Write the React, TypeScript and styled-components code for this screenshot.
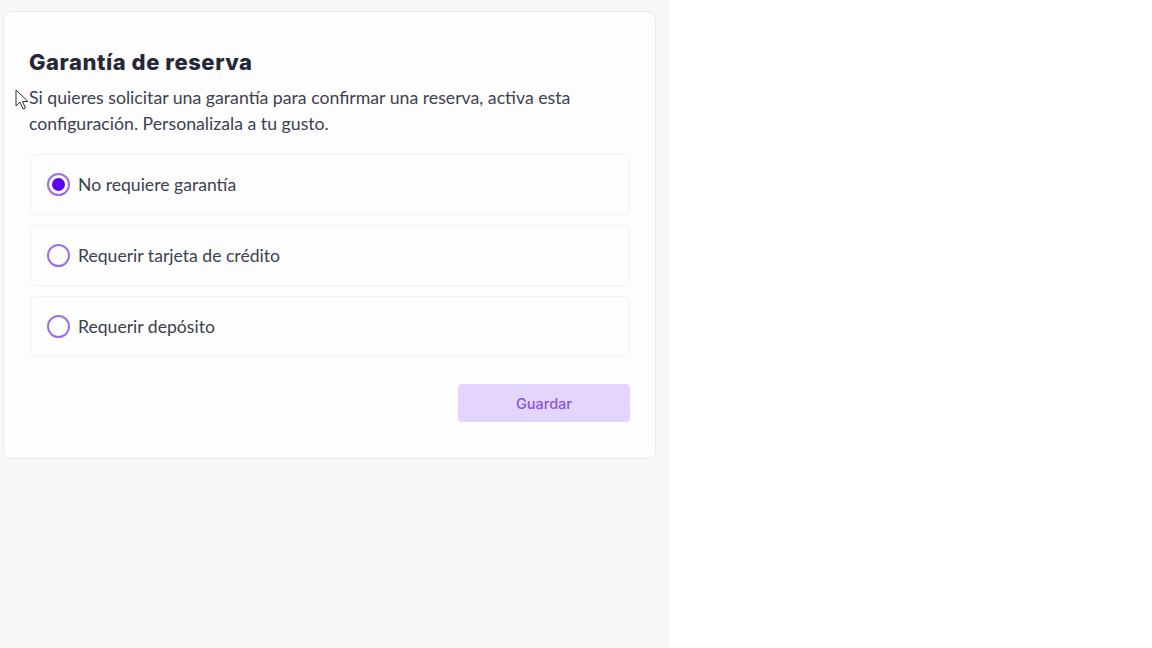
import React, { useState } from "react";
import styled, { createGlobalStyle } from "styled-components";

const Global = createGlobalStyle`
  html, body { margin: 0; padding: 0; background: #ffffff; }
  body { font-family: "Lato", "Noto Sans", sans-serif; }
  * { box-sizing: border-box; }
`;

const Page = styled.div`
  display: flex;
  width: 1152px;
  height: 648px;
  background: #ffffff;
`;

const LeftPanel = styled.div`
  position: relative;
  width: 669px;
  height: 648px;
  background: #f8f8f9;
  padding: 11px 13px 0 3px;
`;

const Card = styled.section`
  background: #fdfdfd;
  border: 1px solid #ebebee;
  border-radius: 8px;
  padding: 36px 25px 36px 25px;
  display: flex;
  flex-direction: column;
`;

const Title = styled.h2`
  margin: 0;
  font-family: "Inter", "Open Sans", sans-serif;
  font-weight: 800;
  font-size: 22px;
  line-height: 28px;
  color: #262838;
  letter-spacing: 0.55px;
`;

const Description = styled.p`
  margin: 9px 0 17px 0;
  font-family: "Lato", "Noto Sans", sans-serif;
  font-size: 17.7px;
  line-height: 26px;
  color: #3d4150;
`;

const Options = styled.div`
  display: flex;
  flex-direction: column;
  gap: 10px;
`;

const OptionRow = styled.label`
  display: flex;
  align-items: center;
  gap: 8px;
  height: 61px;
  padding: 0 16px;
  margin-left: 1px;
  border: 1px solid #f2f2f4;
  border-radius: 6px;
  background: #fdfdfd;
  cursor: pointer;
`;

const Radio = styled.span<{ $checked: boolean }>`
  width: 23px;
  height: 23px;
  border-radius: 50%;
  border: 2px solid #9d6fe3;
  display: flex;
  align-items: center;
  justify-content: center;
  flex-shrink: 0;
  &::after {
    content: "";
    width: 13px;
    height: 13px;
    border-radius: 50%;
    background: #5b00f0;
    display: ${(p) => (p.$checked ? "block" : "none")};
  }
`;

const OptionLabel = styled.span`
  font-family: "Lato", "Noto Sans", sans-serif;
  font-size: 17.6px;
  color: #3b4250;
`;

const Footer = styled.div`
  display: flex;
  justify-content: flex-end;
  margin-top: 27px;
`;

const SaveButton = styled.button`
  width: 172px;
  height: 38px;
  border: none;
  border-radius: 4px;
  background: #e3d5fc;
  color: #8b52e2;
  font-family: "Inter", "Open Sans", sans-serif;
  font-weight: 500;
  font-size: 14.5px;
  cursor: pointer;
`;

const Cursor = styled.svg`
  position: absolute;
  left: 15px;
  top: 89px;
  width: 14px;
  height: 22px;
`;

const options = [
  "No requiere garantía",
  "Requerir tarjeta de crédito",
  "Requerir depósito",
];

export default function App() {
  const [selected, setSelected] = useState(0);
  return (
    <>
      <Global />
      <Page>
        <LeftPanel>
          <Card>
            <Title>Garantía de reserva</Title>
            <Description>
              Si quieres solicitar una garantía para confirmar una reserva, activa esta
              <br />
              configuración. Personalizala a tu gusto.
            </Description>
            <Options>
              {options.map((o, i) => (
                <OptionRow key={o} onClick={() => setSelected(i)}>
                  <Radio $checked={selected === i} />
                  <OptionLabel>{o}</OptionLabel>
                </OptionRow>
              ))}
            </Options>
            <Footer>
              <SaveButton>Guardar</SaveButton>
            </Footer>
          </Card>
          <Cursor viewBox="0 0 14 22">
            <path
              d="M1 1 L1 17 L5 13 L8 20 L10.5 19 L7.5 12.5 L13 12.5 Z"
              fill="#ffffff"
              stroke="#333"
              strokeWidth="1"
              strokeLinejoin="round"
            />
          </Cursor>
        </LeftPanel>
      </Page>
    </>
  );
}
